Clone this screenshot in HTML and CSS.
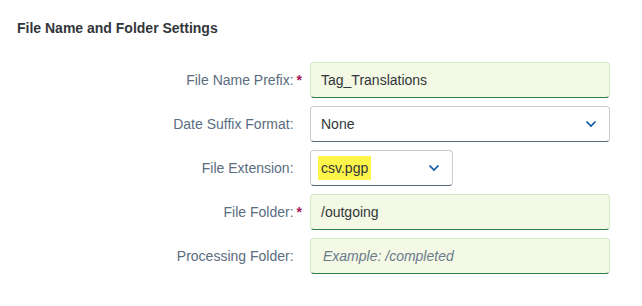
FILE: index.html
```html
<!DOCTYPE html>
<html lang="en">
<head>
<meta charset="utf-8">
<title>File Name and Folder Settings</title>
<link rel="stylesheet" href="styles.css">
</head>
<body>
  <section class="panel">
    <h3 class="title">File Name and Folder Settings</h3>
    <div class="form">
      <label class="label">File Name Prefix:<span class="req">*</span></label>
      <div class="field success"><span class="value">Tag_Translations</span></div>

      <label class="label">Date Suffix Format:<span class="req off">*</span></label>
      <div class="field select"><span class="value">None</span>
        <svg class="chev" width="12" height="8" viewBox="0 0 12 8"><path d="M1.5 1.5 L6 6 L10.5 1.5" fill="none" stroke="#0a5aa8" stroke-width="1.7"/></svg>
      </div>

      <label class="label">File Extension:<span class="req off">*</span></label>
      <div class="field select short"><span class="value"><mark class="hl">csv.pgp</mark></span>
        <svg class="chev" width="12" height="8" viewBox="0 0 12 8"><path d="M1.5 1.5 L6 6 L10.5 1.5" fill="none" stroke="#0a5aa8" stroke-width="1.7"/></svg>
      </div>

      <label class="label">File Folder:<span class="req">*</span></label>
      <div class="field success"><span class="value">/outgoing</span></div>

      <label class="label">Processing Folder:<span class="req off">*</span></label>
      <div class="field success"><span class="placeholder">Example: /completed</span></div>
    </div>
  </section>
</body>
</html>
```

FILE: styles.css
```css
html, body {
  margin: 0;
  padding: 0;
  background: #ffffff;
}

body {
  font-family: "Liberation Sans", Arial, sans-serif;
  font-size: 14px;
  color: #32363a;
}

.panel {
  padding-top: 20px;
}

.title {
  margin: 0 0 26px 0;
  padding-left: 17px;
  font-size: 14px;
  line-height: 16px;
  font-weight: bold;
  color: #32363a;
}

.form {
  display: grid;
  grid-template-columns: 302px 300px;
  column-gap: 8px;
  row-gap: 8px;
}

.label {
  display: flex;
  align-items: center;
  justify-content: flex-end;
  color: #5b6d80;
  font-size: 14px;
}

.req {
  color: #a5175a;
  padding-left: 3px;
  font-weight: bold;
  font-size: 14px;
}

.req.off {
  visibility: hidden;
}

.field {
  box-sizing: border-box;
  height: 36px;
  display: flex;
  align-items: center;
  padding: 0 10px;
  border: 1px solid #c9cdd1;
  border-bottom-color: #56687b;
  border-radius: 4px;
  background: #ffffff;
  color: #32363a;
}

.field.success {
  background: #f3f9e5;
  border-color: #d3e7c6;
  border-bottom-color: #2f7e45;
}

.select {
  justify-content: space-between;
  padding-right: 12px;
}

.short {
  width: 143px;
}

.value {
  white-space: nowrap;
}

.placeholder {
  font-style: italic;
  color: #6a7a8b;
  padding-left: 2px;
}

.hl {
  background: #fdf54a;
  color: #32363a;
  padding: 4px 3px;
  margin-left: -3px;
}

.chev {
  display: block;
}
```
